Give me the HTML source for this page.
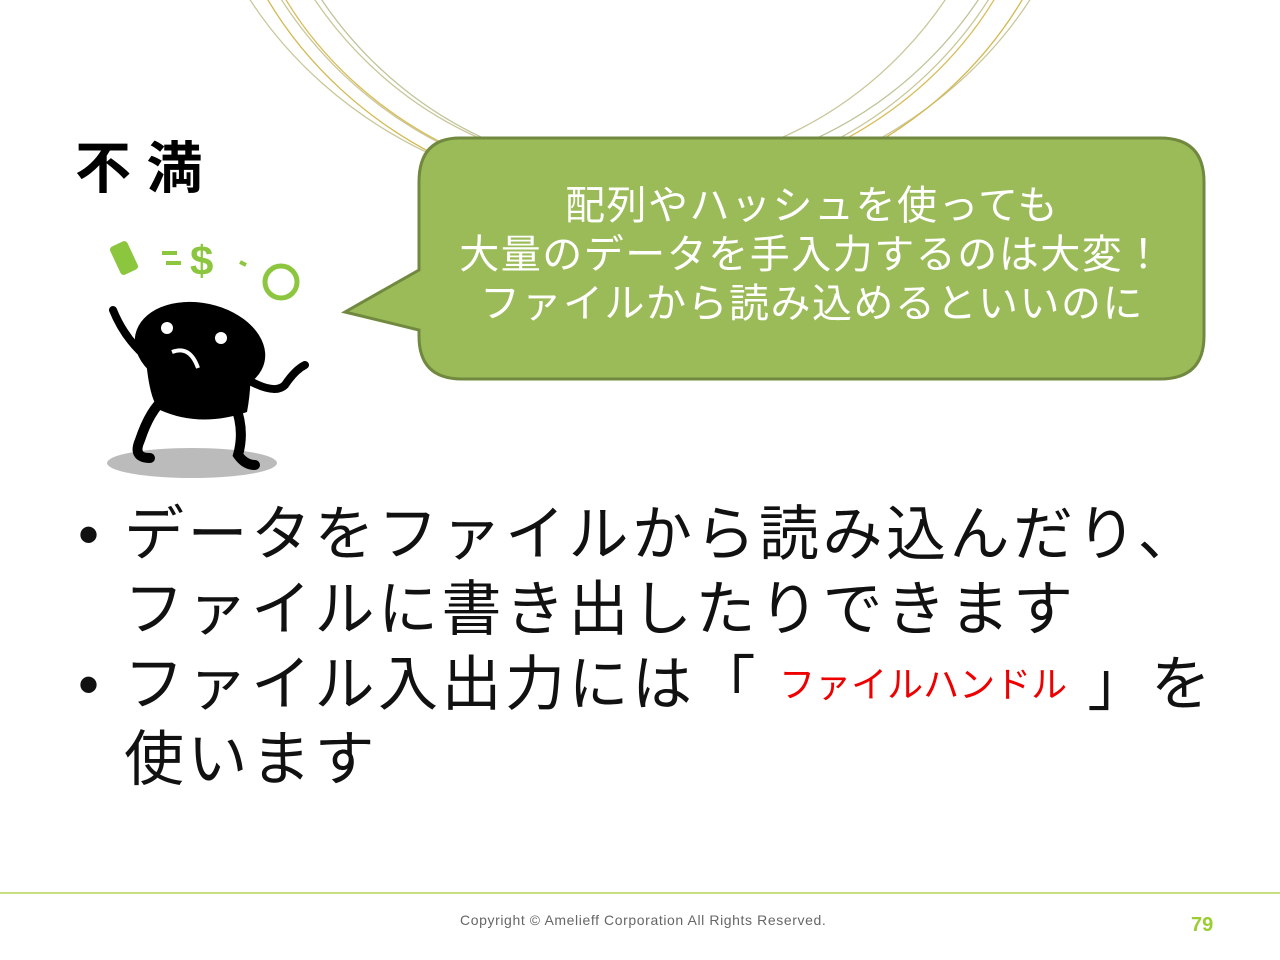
<!DOCTYPE html>
<html><head><meta charset="utf-8"><style>
body{margin:0;width:1280px;height:960px;background:#fff;position:relative;overflow:hidden;font-family:"Liberation Sans","Noto Sans CJK JP",sans-serif}
.a{position:absolute;white-space:nowrap}
</style></head><body>
<svg class="a" style="left:0;top:0" width="1280" height="960">
<g fill="none" stroke-width="1.3">
<ellipse cx="640" cy="-200" rx="450" ry="400" stroke="#c9c79a"/>
<ellipse cx="645" cy="-190" rx="430" ry="395" stroke="#d4b850"/>
<ellipse cx="635" cy="-210" rx="415" ry="400" stroke="#c9c79a"/>
<ellipse cx="650" cy="-220" rx="395" ry="395" stroke="#bfc49a"/>
<ellipse cx="640" cy="-180" rx="405" ry="370" stroke="#d8bd5a"/>
<ellipse cx="630" cy="-230" rx="385" ry="400" stroke="#c9c79a"/>
</g>
<path d="M460 138 H1160 Q1204 138 1204 182 V336 Q1204 379 1160 379 H462 Q419 379 419 336 V330 L345 312 L419 270 V182 Q419 138 460 138 Z" fill="#9bbb59" stroke="#71893f" stroke-width="3"/>
<line x1="0" y1="893" x2="1280" y2="893" stroke="#c9df80" stroke-width="2"/>
<ellipse cx="192" cy="463" rx="85" ry="15" fill="#bbb"/>
<path d="M145 345 Q148 400 160 410 Q200 428 247 412 Q252 385 250 360 Z" fill="#000"/>
<ellipse cx="200" cy="348" rx="66" ry="45" fill="#000" transform="rotate(12 200 348)"/>
<path d="M165 398 Q150 410 140 440 Q132 458 150 458 M235 405 Q245 430 238 455 Q245 465 255 465" stroke="#000" stroke-width="10" fill="none" stroke-linecap="round"/>
<path d="M150 360 Q125 340 113 310 M248 380 Q275 395 285 385 Q295 370 305 365" stroke="#000" stroke-width="8" fill="none" stroke-linecap="round"/>
<circle cx="167" cy="328" r="6" fill="#fff"/><circle cx="221" cy="338" r="6" fill="#fff"/>
<path d="M172 352 Q190 345 198 368" stroke="#fff" stroke-width="4" fill="none"/>
<g fill="#8cc63f" stroke="#8cc63f">
<rect x="115" y="243" width="18" height="30" rx="3" transform="rotate(-25 124 258)"/>
<text x="190" y="275" font-size="42" font-weight="bold" stroke="none">$</text>
<circle cx="281" cy="282" r="16" fill="none" stroke-width="5"/>
<path d="M162 253 h15 M166 263 h15 M240 262 l6 3" stroke-width="4"/>
</g>
</svg>
<div class="a" style="left:75px;top:124px;font-size:56px;font-weight:bold">不&nbsp;満</div>
<div class="a" style="left:419px;top:182px;width:786px;text-align:center;color:#fff;font-size:40px;line-height:49px;letter-spacing:1.5px">配列やハッシュを使っても<br>大量のデータを手入力するのは大変！<br>ファイルから読み込めるといいのに</div>
<div class="a" style="left:78px;top:497px;font-size:60px;line-height:75px;color:#111">•<br><br>•</div>
<div class="a" style="left:124px;top:497px;font-size:60px;line-height:75px;color:#111;letter-spacing:3.5px">データをファイルから読み込んだり、<br>ファイルに書き出したりできます<br>ファイル入出力には「 <span style="color:#e00;font-size:36px;vertical-align:8px;letter-spacing:0">ファイルハンドル</span> 」を<br>使います</div>
<div class="a" style="left:460px;top:912px;font-size:14px;color:#666;letter-spacing:0.6px">Copyright © Amelieff Corporation All Rights Reserved.</div>
<div class="a" style="left:1191px;top:914px;font-size:20px;font-weight:bold;color:#9acd32">79</div>
</body></html>
